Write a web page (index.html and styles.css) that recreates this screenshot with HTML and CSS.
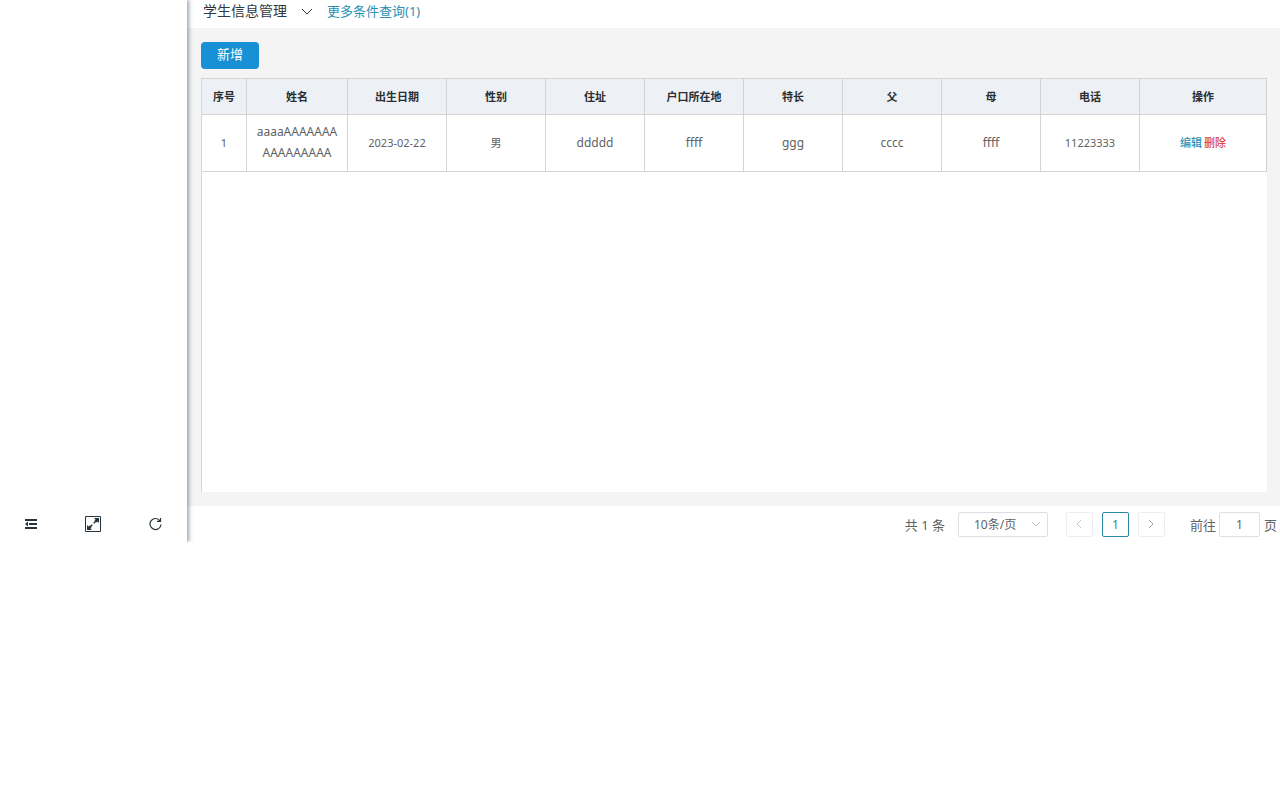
FILE: index.html
```html
<!DOCTYPE html>
<html lang="zh-CN">
<head>
<meta charset="utf-8">
<title>学生信息管理</title>
<link rel="stylesheet" href="styles.css">
</head>
<body>
<div class="app">
  <aside class="sidebar">
    <nav class="tools">
      <button class="tool" type="button" aria-label="收起菜单">
        <svg width="12" height="10" viewBox="0 0 12 10" fill="currentColor"><path d="M0 0h12v2H0zM4 4h8v2H4zM0 8h12v2H0zM0 5l3-2.500v5z"/></svg>
      </button>
      <button class="tool" type="button" aria-label="全屏">
        <svg width="16" height="16" viewBox="0 0 16 16" fill="none" stroke="currentColor"><path d="M.5.5h15v15H.5z"/><path stroke-width="1.500" d="M4 12l3.300-3.300M8.700 7.300L12 4"/><path fill="currentColor" stroke="none" d="M9 2h5v5l-1.500-1.500-1.200 1-1.800-1.800 1-1.200zM2 9v5h5l-1.500-1.500 1-1.200-1.800-1.800-1.200 1z"/></svg>
      </button>
      <button class="tool" type="button" aria-label="刷新">
        <svg width="13" height="14" viewBox="0 0 13 14" fill="none" stroke="currentColor" stroke-width="1.200"><path d="M11 3.800A5.500 5.500 0 1 0 12 7.500M11.500 1v3.300H8"/></svg>
      </button>
    </nav>
  </aside>
  <main class="main">
    <header class="topbar">
      <h1 class="title">学生信息管理</h1>
      <svg class="title-arrow" width="12" height="7" viewBox="0 0 12 7" fill="none" stroke="currentColor"><path d="M1 1l5 5 5-5"/></svg>
      <a class="more" href="#">更多条件查询(1)</a>
    </header>
    <section class="content">
      <button class="add" type="button">新增</button>
      <div class="panel">
        <table class="grid">
          <colgroup><col class="col-index"><col class="col-name"><col><col><col><col><col><col><col><col><col class="col-action"></colgroup>
          <thead>
            <tr><th>序号</th><th>姓名</th><th>出生日期</th><th>性别</th><th>住址</th><th>户口所在地</th><th>特长</th><th>父</th><th>母</th><th>电话</th><th>操作</th></tr>
          </thead>
          <tbody>
            <tr><td>1</td><td class="word">aaaaAAAAAAAAAAAAAAAA</td><td>2023-02-22</td><td>男</td><td class="word">ddddd</td><td class="word">ffff</td><td class="word">ggg</td><td class="word">cccc</td><td class="word">ffff</td><td>11223333</td><td class="actions"><a class="edit" href="#">编辑</a><a class="delete" href="#">删除</a></td></tr>
          </tbody>
        </table>
      </div>
    </section>
    <footer class="pager">
      <span class="total">共 1 条</span>
      <span class="size">
        <select class="size-select" aria-label="每页条数"><option>10条/页</option></select>
        <svg class="size-arrow" width="8" height="5" viewBox="0 0 8 5" fill="none" stroke="currentColor"><path d="M0 0l4 4 4-4"/></svg>
      </span>
      <span class="pages">
        <button class="page" type="button" aria-label="上一页" disabled><svg width="6" height="10" viewBox="0 0 6 10" fill="none" stroke="currentColor"><path d="M5 1L1 5l4 4"/></svg></button>
        <button class="page current" type="button">1</button>
        <button class="page next" type="button" aria-label="下一页"><svg width="6" height="10" viewBox="0 0 6 10" fill="none" stroke="currentColor"><path d="M1 1l4 4-4 4"/></svg></button>
      </span>
      <span class="jump"><label for="jump">前往</label><input class="jump-input" id="jump" type="text" value="1"><span class="unit">页</span></span>
    </footer>
  </main>
</div>
</body>
</html>
```
FILE: styles.css
```css
* {
  box-sizing: border-box;
}

body {
  margin: 0;
  background: #fff;
  color: #606266;
  font-family: "Noto Sans", "Noto Sans CJK SC", sans-serif;
  font-size: 12px;
}

button,
input,
select {
  margin: 0;
  padding: 0;
  font-family: inherit;
  color: inherit;
}

a {
  text-decoration: none;
}

.app {
  display: flex;
  min-height: 542px;
}

.sidebar {
  position: relative;
  z-index: 1;
  display: flex;
  flex: 0 0 187px;
  flex-direction: column;
  justify-content: flex-end;
  background: #fff;
  box-shadow: 2px 0 4px rgba(30, 60, 85, 0.45);
  clip-path: inset(0 -8px 0 0);
}

.tools {
  display: flex;
  height: 36px;
}

.tool {
  display: flex;
  flex: 1;
  align-items: center;
  justify-content: center;
  border: 0;
  background: none;
  color: #26343c;
}

.main {
  display: flex;
  flex: 1;
  flex-direction: column;
  min-width: 0;
}

.topbar {
  display: flex;
  align-items: center;
  height: 28px;
  padding: 0 16px 6px;
}

.title {
  margin: 0;
  color: #303840;
  font-size: 14px;
  font-weight: 400;
  line-height: 22px;
}

.title-arrow {
  margin: 0 14px;
  color: #303840;
}

.more {
  color: #2a90b4;
  font-size: 13px;
  line-height: 22px;
}

.content {
  display: flex;
  flex: 1;
  flex-direction: column;
  align-items: flex-start;
  gap: 9px;
  padding: 14px 13px 14px 14px;
  background: #f4f4f4;
}

.add {
  width: 58px;
  height: 27px;
  padding-bottom: 2px;
  border: 0;
  border-radius: 4px;
  background: #1890d5;
  color: #fff;
  font-size: 13px;
  line-height: 25px;
}

.panel {
  flex: 1;
  width: 100%;
  border-left: 1px solid #d8d8d8;
  background: #fff;
}

.grid {
  width: 100%;
  border-spacing: 0;
  border-top: 1px solid #d3d3d3;
  table-layout: fixed;
  font-size: 11px;
  line-height: 21px;
  text-align: center;
}

.col-index {
  width: 45px;
}

.col-name {
  width: 101px;
}

.col-action {
  width: 127px;
}

.grid th,
.grid td {
  padding: 7px 8px;
  border-right: 1px solid #d3d3d3;
  border-bottom: 1px solid #d3d3d3;
  overflow-wrap: anywhere;
}

.grid td {
  padding: 6px 8px 8px;
}

.grid th {
  background: #edf1f5;
  color: #2a2e32;
  font-weight: 700;
}

.grid .word {
  font-size: 12px;
}

.actions {
  white-space: nowrap;
}

.edit,
.delete {
  font-weight: 500;
}

.edit {
  margin-right: 2px;
  color: #2a90b4;
}

.delete {
  color: #d84c4c;
}

.pager {
  display: flex;
  align-items: center;
  justify-content: flex-end;
  height: 36px;
  padding-right: 3px;
}

.total {
  margin-right: 13px;
  font-size: 13px;
}

.size {
  position: relative;
  margin-right: 18px;
}

.size-select {
  display: block;
  width: 90px;
  height: 25px;
  padding-left: 15px;
  border: 1px solid #dcdfe3;
  border-radius: 2px;
  background: #fff;
  appearance: none;
  font-size: 12px;
}

.size-arrow {
  position: absolute;
  top: 10px;
  right: 8px;
  color: #b8bcc2;
  pointer-events: none;
}

.pages {
  display: flex;
  gap: 9px;
  margin-right: 25px;
}

.page {
  display: flex;
  align-items: center;
  justify-content: center;
  width: 27px;
  height: 25px;
  border: 1px solid #eceef2;
  border-radius: 2px;
  background: #fff;
  color: #c0c4cc;
  font-size: 12px;
}

.page.current {
  border-color: #2a85a8;
  color: #2a85a8;
}

.page.next {
  color: #a4a8ae;
}

.jump {
  display: flex;
  align-items: center;
  gap: 3px;
  font-size: 13px;
}

.unit {
  padding-left: 1px;
}

.jump-input {
  width: 41px;
  height: 25px;
  border: 1px solid #dcdfe3;
  border-radius: 2px;
  font-size: 12px;
  text-align: center;
}
```
